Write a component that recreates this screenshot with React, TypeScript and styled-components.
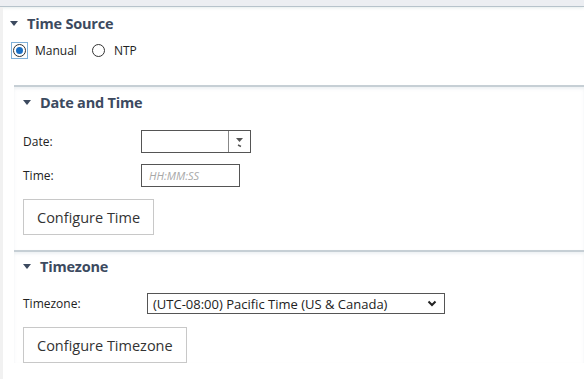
import React from 'react'
import styled, { createGlobalStyle } from 'styled-components'

const GlobalStyle = createGlobalStyle`
    html, body {
        margin: 0;
        padding: 0;
        background: #ffffff;
        font-family: "Open Sans", "Noto Sans", sans-serif;
        color: #222;
    }
`

const HEADER_COLOR = '#3c4a5f'

const TopBar = styled.div`
    height: 6px;
    background: #eceef2;
    border-bottom: 1px solid #b7c3cb;
    box-shadow: 0 1px 3px rgba(180, 200, 200, 0.35);
`

const Page = styled.div`
    display: flex;
    min-height: 372px;
`

const LeftStrip = styled.div`
    width: 3px;
    background: #f1f1f1;
`

const Content = styled.div`
    flex-grow: 1;
`

const Panel = styled.div<{ $nested?: boolean }>`
    margin-left: ${p => (p.$nested ? '11px' : '0')};
    padding-left: ${p => (p.$nested ? '9px' : '7px')};
    border-top: ${p => (p.$nested ? '2px solid #c6cfd5' : 'none')};
    box-shadow: ${p => (p.$nested ? 'inset 0 2px 3px rgba(200, 210, 215, 0.3)' : 'none')};
`

const HeaderRow = styled.div<{ $top: number }>`
    display: flex;
    align-items: center;
    gap: 9px;
    height: 18px;
    margin-top: ${p => p.$top}px;
    color: ${HEADER_COLOR};
    font-weight: 700;
    font-size: 14.5px;
    letter-spacing: -0.2px;
`

const Caret = styled.span`
    width: 0;
    height: 0;
    border-left: 4px solid transparent;
    border-right: 4px solid transparent;
    border-top: 5px solid ${HEADER_COLOR};
`

type HeaderProps = {
    title: string
    top: number
}

const Header = ({ title, top }: HeaderProps) => (
    <HeaderRow $top={top}>
        <Caret />
        {title}
    </HeaderRow>
)

const RadioGroup = styled.div`
    display: flex;
    align-items: center;
    height: 18px;
    margin-top: 9px;
    margin-left: 1px;
    font-size: 12px;
    color: #222;
`

const RadioOption = styled.label`
    display: flex;
    align-items: center;
    gap: 7px;
    margin-right: 13px;
`

const RadioFrame = styled.span<{ $focused?: boolean }>`
    display: flex;
    align-items: center;
    justify-content: center;
    width: 17px;
    height: 17px;
    box-sizing: border-box;
    border: 1px solid ${p => (p.$focused ? '#7fb0d8' : 'transparent')};
`

const RadioCircle = styled.span<{ $checked?: boolean }>`
    position: relative;
    width: 13px;
    height: 13px;
    box-sizing: border-box;
    border-radius: 50%;
    border: 1px solid #333;
    background: #fff;

    &::after {
        content: '';
        display: ${p => (p.$checked ? 'block' : 'none')};
        position: absolute;
        left: 2px;
        top: 2px;
        width: 7px;
        height: 7px;
        border-radius: 50%;
        background: #1a6fc4;
    }
`

const Spacer = styled.div<{ $h: number }>`
    height: ${p => p.$h}px;
`

const FieldRow = styled.div<{ $top: number; $labelWidth: number }>`
    display: flex;
    align-items: center;
    margin-top: ${p => p.$top}px;
    font-size: 12px;
    color: #222;

    & > span:first-child {
        width: ${p => p.$labelWidth}px;
    }
`

const DateBox = styled.div`
    display: flex;
    width: 110px;
    height: 23px;
    box-sizing: border-box;
    border: 1px solid #555;
`

const DateValue = styled.div`
    flex-grow: 1;
    border-right: 1px solid #888;
`

const DateButton = styled.div`
    width: 21px;
    display: flex;
    align-items: center;
    justify-content: center;
`

const TimeInput = styled.div`
    display: flex;
    align-items: center;
    width: 99px;
    height: 23px;
    box-sizing: border-box;
    border: 1px solid #555;
    padding-left: 7px;
    font-size: 11px;
    font-style: italic;
    color: #a8a8a8;
`

const Button = styled.div<{ $top: number }>`
    display: inline-flex;
    align-items: center;
    justify-content: center;
    margin-top: ${p => p.$top}px;
    height: 36px;
    padding: 0 13px;
    box-sizing: border-box;
    border: 1px solid #c8c8c8;
    background: #fff;
    font-size: 14.5px;
    color: #333;
`

const Select = styled.div`
    display: flex;
    align-items: center;
    justify-content: space-between;
    width: 298px;
    height: 21px;
    box-sizing: border-box;
    border: 1px solid #555;
    padding: 0 7px 0 5px;
    font-size: 13px;
    color: #222;
`

const DateArrow = () => (
    <svg width="9" height="12" viewBox="0 0 9 12">
        <path d="M1 2 L8 2 L4.5 6 Z" fill="#555" />
        <path d="M3 9 L6 10.5" stroke="#555" strokeWidth="1.4" />
    </svg>
)

const Chevron = () => (
    <svg width="10" height="7" viewBox="0 0 10 7">
        <path d="M1.5 1.5 L5 5 L8.5 1.5" stroke="#222" strokeWidth="2" fill="none" />
    </svg>
)

const App = () => {
    return (
        <>
            <GlobalStyle />
            <TopBar />
            <Page>
                <LeftStrip />
                <Content>
                    <Panel>
                        <Header title="Time Source" top={7} />
                        <RadioGroup>
                            <RadioOption>
                                <RadioFrame $focused>
                                    <RadioCircle $checked />
                                </RadioFrame>
                                Manual
                            </RadioOption>
                            <RadioOption>
                                <RadioFrame>
                                    <RadioCircle />
                                </RadioFrame>
                                NTP
                            </RadioOption>
                        </RadioGroup>
                        <Spacer $h={26} />
                    </Panel>
                    <Panel $nested>
                        <Header title="Date and Time" top={6} />
                        <FieldRow $top={19} $labelWidth={118}>
                            <span>Date:</span>
                            <DateBox>
                                <DateValue />
                                <DateButton><DateArrow /></DateButton>
                            </DateBox>
                        </FieldRow>
                        <FieldRow $top={11} $labelWidth={118}>
                            <span>Time:</span>
                            <TimeInput>HH:MM:SS</TimeInput>
                        </FieldRow>
                        <Button $top={12}>Configure Time</Button>
                        <Spacer $h={15} />
                    </Panel>
                    <Panel $nested>
                        <Header title="Timezone" top={5} />
                        <FieldRow $top={18} $labelWidth={124}>
                            <span>Timezone:</span>
                            <Select>
                                (UTC-08:00) Pacific Time (US &amp; Canada)
                                <Chevron />
                            </Select>
                        </FieldRow>
                        <Button $top={13}>Configure Timezone</Button>
                    </Panel>
                </Content>
            </Page>
        </>
    )
}

export default App
